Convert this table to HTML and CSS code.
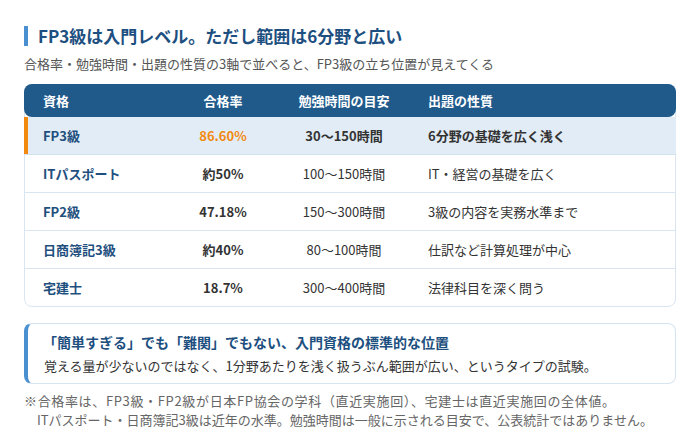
FILE: index.html
```html
<!DOCTYPE html>
<html lang="ja">
<head>
<meta charset="utf-8">
<link rel="stylesheet" href="styles.css">
</head>
<body>
<div class="page">
  <h1 class="title">FP3級は入門レベル。ただし範囲は6分野と広い</h1>
  <p class="subtitle">合格率・勉強時間・出題の性質の3軸で並べると、FP3級の立ち位置が見えてくる</p>

  <div class="table">
    <div class="row head">
      <div class="c1">資格</div>
      <div class="c2">合格率</div>
      <div class="c3">勉強時間の目安</div>
      <div class="c4">出題の性質</div>
    </div>
    <div class="row hl">
      <div class="c1">FP3級</div>
      <div class="c2 orange">86.60%</div>
      <div class="c3">30〜150時間</div>
      <div class="c4">6分野の基礎を広く浅く</div>
    </div>
    <div class="row">
      <div class="c1">ITパスポート</div>
      <div class="c2">約50%</div>
      <div class="c3">100〜150時間</div>
      <div class="c4">IT・経営の基礎を広く</div>
    </div>
    <div class="row">
      <div class="c1">FP2級</div>
      <div class="c2">47.18%</div>
      <div class="c3">150〜300時間</div>
      <div class="c4">3級の内容を実務水準まで</div>
    </div>
    <div class="row">
      <div class="c1">日商簿記3級</div>
      <div class="c2">約40%</div>
      <div class="c3">80〜100時間</div>
      <div class="c4">仕訳など計算処理が中心</div>
    </div>
    <div class="row last">
      <div class="c1">宅建士</div>
      <div class="c2">18.7%</div>
      <div class="c3">300〜400時間</div>
      <div class="c4">法律科目を深く問う</div>
    </div>
  </div>

  <div class="callout">
    <p class="callout-title">「簡単すぎる」でも「難関」でもない、入門資格の標準的な位置</p>
    <p class="callout-text">覚える量が少ないのではなく、1分野あたりを浅く扱うぶん範囲が広い、というタイプの試験。</p>
  </div>

  <p class="note"><span class="note-first">※合格率は、FP3級・FP2級が日本FP協会の学科（直近実施回）、宅建士は直近実施回の全体値。</span><br>ITパスポート・日商簿記3級は近年の水準。勉強時間は一般に示される目安で、公表統計ではありません。</p>
</div>
</body>
</html>
```

FILE: styles.css
```css
* { box-sizing: border-box; }
html, body { margin: 0; padding: 0; background: #ffffff; }
body {
  font-family: "Noto Sans CJK JP", "Noto Sans", sans-serif;
  color: #333333;
}
.page {
  width: 700px;
  padding: 26px 24px 0 24px;
}
.title {
  margin: 0;
  font-size: 17px;
  line-height: 20px;
  font-weight: 700;
  color: #1d4f80;
  border-left: 4px solid #4a90d0;
  padding-left: 10px;
}
.subtitle {
  margin: 8px 0 0 0;
  font-size: 13px;
  line-height: 20px;
  color: #555555;
}
.table {
  margin-top: 10px;
  border: 1px solid #d9e6f1;
  border-radius: 8px;
  background: #ffffff;
}
.row {
  display: grid;
  grid-template-columns: 141px 116px 126px 1fr;
  align-items: center;
  margin: 0 -1px;
  height: 38px;
  border-bottom: 1px solid #d9e6f1;
  font-size: 13px;
}
.row.last { border-bottom: none; height: 37px; }
.row > div { white-space: nowrap; }
.c1 { padding-left: 19px; font-weight: 700; color: #1e4f7e; }
.c2 { text-align: center; font-weight: 700; color: #333333; }
.c3 { text-align: center; color: #333333; }
.c4 { padding-left: 21px; color: #333333; }
.row.head {
  margin: -1px -1px 0 -1px;
  height: 33px;
  background: #1f5a8b;
  border-radius: 8px;
  border-bottom: none;
}
.row.head > div { color: #ffffff; font-weight: 700; }
.row.hl {
  background: #e2ecf6;
  box-shadow: inset 4px 0 0 #f28a12;
  border-bottom-color: #d3e2ef;
}
.row.hl .c3, .row.hl .c4 { font-weight: 700; }
.orange { color: #f28a12 !important; }
.callout {
  margin-top: 16px;
  border: 1px solid #d6e4f0;
  border-left: 4px solid #4a90d0;
  border-radius: 8px;
  padding: 7px 16px 6px 15px;
  background: #ffffff;
}
.callout p { margin: 0; line-height: 23px; }
.callout-title { font-size: 14px; font-weight: 700; color: #1d4f80; }
.callout-text { font-size: 13px; color: #333333; padding-left: 1px; }
.note {
  margin: 7px 0 0 0;
  font-size: 13px;
  line-height: 19px;
  color: #666666;
  padding-left: 13px;
  text-indent: -13px;
  white-space: nowrap;
}
.note-first { letter-spacing: 0.65px; }
```
